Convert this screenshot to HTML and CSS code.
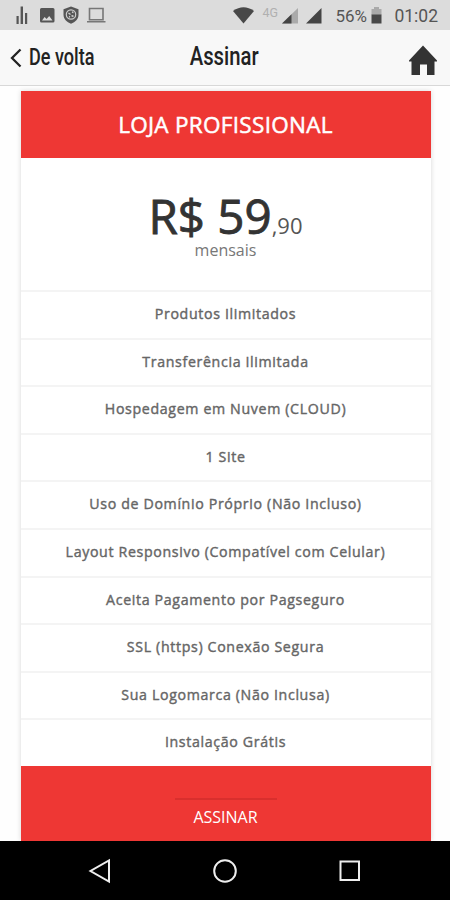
FILE: index.html
```html
<!DOCTYPE html>
<html lang="pt-BR">
<head>
    <meta charset="utf-8">
    <title>Assinar</title>
    <link rel="stylesheet" href="styles.css">
</head>
<body>
    <div class="status-bar">
        <svg class="status-icons" width="110" height="30" viewBox="0 0 110 30">
            <g fill="#555">
                <path d="M16.5 16h2.2v8h-2.2zM20.6 6.5h2.4V24h-2.4zM25 13h2.2v11H25z"/>
                <path fill-rule="evenodd" d="M41.5 8h11.5q1.500 0 1.500 1.500v11.500q0 1.500-1.500 1.500H41.500q-1.500 0-1.500-1.500V9.500q0-1.500 1.500-1.500zM42 20.500h10.500l-3.300-4.500-2.600 3-2-2z"/>
                <path d="M71 6.500l7.500 2.800v5.200c0 4.500-3.200 7.800-7.500 9.200-4.300-1.400-7.500-4.700-7.500-9.200V9.300z"/>
            </g>
            <circle cx="71" cy="14.500" r="4.700" fill="none" stroke="#ccc" stroke-width="1.200"/>
            <path d="M68.500 13l2 1.500M71.500 15.500l2 1M72 12l1.500.5M69 16.500l1 .5" stroke="#ccc" stroke-width="1.400"/>
            <path d="M89.500 8.500h13.500v11.300H89.500zM87 21.800h18.500" fill="none" stroke="#777" stroke-width="1.600"/>
        </svg>
        <div class="status-right">
            <svg width="22" height="30" viewBox="0 0 22 30"><path d="M0 11Q10.500 3.500 21 11L10.500 23.500z" fill="#484848"/></svg>
            <span class="network">4G</span>
            <svg width="41" height="30" viewBox="0 0 41 30">
                <path d="M1 23.500L17 8v15.500z" fill="#aaa"/>
                <path d="M1 23.500L10.500 14.300v9.200z" fill="#444"/>
                <path d="M25 23.500L40.500 8v15.500z" fill="#444"/>
            </svg>
            <span class="battery-level">56%</span>
            <svg width="11" height="30" viewBox="0 0 11 30">
                <path d="M3 7h5v2h2.500v6H.5V9H3z" fill="#aaa"/>
                <path d="M.5 14.500h10v9H.5z" fill="#484848"/>
            </svg>
            <span class="clock">01:02</span>
        </div>
    </div>

    <header class="header">
        <a class="back" href="#">
            <svg width="12" height="20" viewBox="0 0 12 20"><path d="M10.500 1.500L2 10l8.500 8.500" fill="none" stroke="#222" stroke-width="2.300"/></svg>
            <span class="back-text">De volta</span>
        </a>
        <h1 class="title">Assinar</h1>
        <a class="home" href="#">
            <svg width="30" height="31" viewBox="0 0 30 31"><path d="M15 .5L29 15.500v1h-2.500V30H19V19.500h-7V30H3.500V16.500H1v-1z" fill="#333"/></svg>
        </a>
    </header>

    <main class="content">
        <div class="plan">
            <h2 class="plan-name">LOJA PROFISSIONAL</h2>
            <div class="price">
                <div class="price-value"><span class="amount">R$ 59</span><span class="cents">,90</span></div>
                <div class="period">mensais</div>
            </div>
            <ul class="features">
                <li>Produtos Ilimitados</li>
                <li>Transferência Ilimitada</li>
                <li>Hospedagem em Nuvem (CLOUD)</li>
                <li>1 Site</li>
                <li>Uso de Domínio Próprio (Não Incluso)</li>
                <li>Layout Responsivo (Compatível com Celular)</li>
                <li>Aceita Pagamento por Pagseguro</li>
                <li>SSL (https) Conexão Segura</li>
                <li>Sua Logomarca (Não Inclusa)</li>
                <li>Instalação Grátis</li>
            </ul>
            <div class="plan-footer">
                <a class="subscribe" href="#">ASSINAR</a>
            </div>
        </div>
    </main>

    <nav class="nav-bar">
        <svg width="24" height="26" viewBox="0 0 24 26"><path d="M21 2.500v21L2.500 13z"/></svg>
        <svg width="26" height="26" viewBox="0 0 26 26"><circle cx="13" cy="13" r="10.800"/></svg>
        <svg width="24" height="26" viewBox="0 0 24 26"><path d="M2.500 3.500h18.500v18.500H2.500z"/></svg>
    </nav>
</body>
</html>
```

FILE: styles.css
```css
* {
    box-sizing: border-box;
}

body {
    margin: 0;
    width: 450px;
    height: 900px;
    overflow: hidden;
    display: flex;
    flex-direction: column;
    background-color: #fefefe;
    font-family: "Open Sans", sans-serif;
}

svg {
    display: block;
    flex: none;
}

a {
    color: inherit;
    text-decoration: none;
}

.status-bar {
    height: 30px;
    flex: none;
    display: flex;
    justify-content: space-between;
    padding-right: 12px;
    background-color: #dcdcdc;
    color: #555;
    font-family: Roboto, sans-serif;
    font-size: 17px;
    line-height: 32px;
}

.status-right {
    display: flex;
}

.network {
    width: 19px;
    margin: 0 0 0 7px;
    font-size: 12.500px;
    line-height: 26px;
    color: #b0b0b0;
}

.battery-level {
    width: 33px;
    margin: 0 3px 0 13px;
}

.clock {
    margin-left: 12px;
    font-size: 17.5px;
}

.header {
    height: 56px;
    flex: none;
    display: grid;
    grid-template-columns: 1fr auto 1fr;
    align-items: center;
    padding: 0 12px 0 10px;
    background-color: #f8f8f8;
    border-bottom: 1px solid #d8d8d8;
    color: #222;
    font-family: Roboto, sans-serif;
}

.back {
    display: flex;
    align-items: center;
    gap: 7px;
}

.back-text {
    padding-bottom: 2px;
    font-size: 23.500px;
    font-weight: 500;
    line-height: 28px;
    transform: scaleX(0.77);
    transform-origin: left;
    white-space: nowrap;
}

.title {
    margin: 0;
    padding-bottom: 3px;
    font-size: 26px;
    font-weight: 500;
    line-height: 30px;
    transform: scaleX(0.78);
}

.home {
    justify-self: end;
    padding-top: 6px;
}

.content {
    flex: 1;
    min-height: 0;
    padding: 5px 19.500px 0 20.500px;
}

.plan {
    height: 750px;
    background-color: #fff;
    box-shadow: 0 0 5px rgba(0, 0, 0, 0.16);
    text-align: center;
}

.plan-name {
    margin: 0;
    height: 67px;
    background-color: #ee3734;
    color: #fff;
    font-size: 22.500px;
    font-weight: 400;
    letter-spacing: 0.300px;
    line-height: 67px;
    -webkit-text-stroke: 0.5px #fff;
}

.price {
    height: 132px;
    padding-top: 31px;
}

.price-value {
    height: 51px;
    line-height: 54px;
    color: #333;
}

.amount {
    font-size: 47.500px;
    -webkit-text-stroke: 0.9px #333;
}

.cents {
    font-size: 22px;
    color: #555;
}

.period {
    font-size: 16px;
    line-height: 20px;
    color: #777;
}

.features {
    margin: 0;
    padding: 0;
    list-style: none;
}

.features li {
    height: 47.600px;
    border-top: 2px solid #f4f4f4;
    color: #666;
    font-size: 14.200px;
    letter-spacing: 0.650px;
    line-height: 43.500px;
    -webkit-text-stroke: 0.4px #666;
}

.plan-footer {
    height: 75px;
    display: flex;
    justify-content: center;
    align-items: flex-end;
    background-color: #ee3734;
}

.subscribe {
    width: 102px;
    height: 43px;
    border-top: 2px solid #d92f2d;
    color: #fff;
    font-size: 16px;
    line-height: 35px;
}

.nav-bar {
    height: 59px;
    flex: none;
    display: flex;
    justify-content: space-between;
    align-items: center;
    padding: 0 88px 0 88px;
    background-color: #000;
}

.nav-bar svg {
    fill: none;
    stroke: #eee;
    stroke-width: 2;
}
```
